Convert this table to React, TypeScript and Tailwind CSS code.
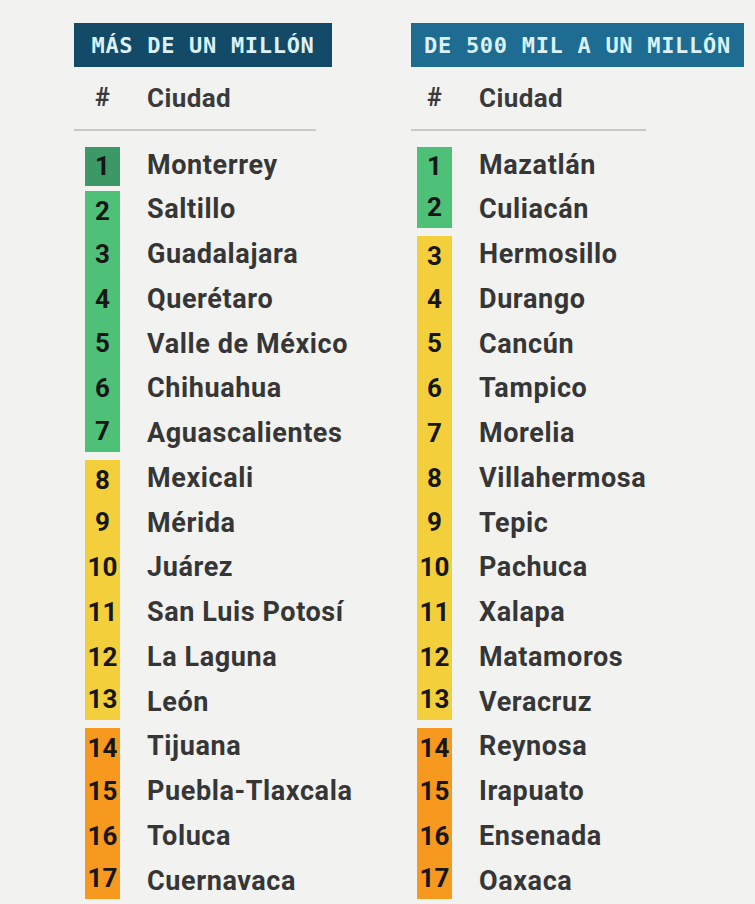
import React from "react";

type Row = { n: number; city: string; color: string; first: boolean; last: boolean };

const DG = "bg-[#3d9868]";
const G = "bg-[#4fc077]";
const Y = "bg-[#f4cf3c]";
const O = "bg-[#f7981f]";

function build(cities: string[], groups: [number, number, string][]): Row[] {
  const rows: Row[] = [];
  groups.forEach(([a, b, c]) => {
    for (let i = a; i <= b; i++) {
      rows.push({ n: i, city: cities[i - 1], color: c, first: i === a, last: i === b });
    }
  });
  return rows;
}

const leftCities = [
  "Monterrey",
  "Saltillo",
  "Guadalajara",
  "Querétaro",
  "Valle de México",
  "Chihuahua",
  "Aguascalientes",
  "Mexicali",
  "Mérida",
  "Juárez",
  "San Luis Potosí",
  "La Laguna",
  "León",
  "Tijuana",
  "Puebla-Tlaxcala",
  "Toluca",
  "Cuernavaca",
];

const rightCities = [
  "Mazatlán",
  "Culiacán",
  "Hermosillo",
  "Durango",
  "Cancún",
  "Tampico",
  "Morelia",
  "Villahermosa",
  "Tepic",
  "Pachuca",
  "Xalapa",
  "Matamoros",
  "Veracruz",
  "Reynosa",
  "Irapuato",
  "Ensenada",
  "Oaxaca",
];

const leftRows = build(leftCities, [
  [1, 1, DG],
  [2, 7, G],
  [8, 13, Y],
  [14, 17, O],
]);
const rightRows = build(rightCities, [
  [1, 2, G],
  [3, 13, Y],
  [14, 17, O],
]);

function Column({
  title,
  headerBg,
  colW,
  numPad,
  lineW,
  rows,
}: {
  title: string;
  headerBg: string;
  colW: string;
  numPad: string;
  lineW: string;
  rows: Row[];
}) {
  return (
    <div className={`flex flex-col shrink-0 ${colW}`}>
      <div
        className={`${headerBg} w-full h-[44px] flex items-center justify-center text-[#dcf1f6] text-[22px] font-bold tracking-[0.7px]`}
        style={{ fontFamily: '"DejaVu Sans Mono", "Liberation Mono", monospace' }}
      >
        {title}
      </div>
      <div className={`h-[62px] flex items-center ${numPad} text-[#3a3a3a] text-[26px] font-bold tracking-[0.4px]`}>
        <div className="w-[35px] text-center text-[25px]">#</div>
        <div className="ml-[27px]">Ciudad</div>
      </div>
      <div className={`h-[2px] bg-[#c9c9c9] ${lineW}`} />
      <div className="mt-[11.6px] flex flex-col">
        {rows.map((r) => (
          <div key={r.n} className={`h-[44.75px] flex items-stretch ${numPad}`}>
            <div className="w-[35px] shrink-0 flex flex-col">
              <div
                className={`${r.color} flex-1 flex items-center justify-center text-[#161616] text-[26px] font-bold ${
                  r.first ? "mt-[4px]" : ""
                } ${r.last ? "mb-[4px]" : ""}`}
              >
                {r.n}
              </div>
            </div>
            <div className="ml-[27px] flex items-center text-[#363636] text-[27px] font-bold tracking-[0.6px] whitespace-nowrap">
              {r.city}
            </div>
          </div>
        ))}
      </div>
    </div>
  );
}

export default function App() {
  return (
    <div
      className="w-[755px] h-[904px] overflow-hidden bg-[#f2f2f1] pt-[23px] pl-[74px] flex gap-[79px]"
      style={{ fontFamily: 'Roboto, "Noto Sans", sans-serif' }}
    >
      <Column
        title="MÁS DE UN MILLÓN"
        headerBg="bg-[#124a68]"
        colW="w-[258px]"
        numPad="pl-[11px]"
        lineW="w-[242px]"
        rows={leftRows}
      />
      <Column
        title="DE 500 MIL A UN MILLÓN"
        headerBg="bg-[#1e6c91]"
        colW="w-[333px]"
        numPad="pl-[6px]"
        lineW="w-[235px]"
        rows={rightRows}
      />
    </div>
  );
}
